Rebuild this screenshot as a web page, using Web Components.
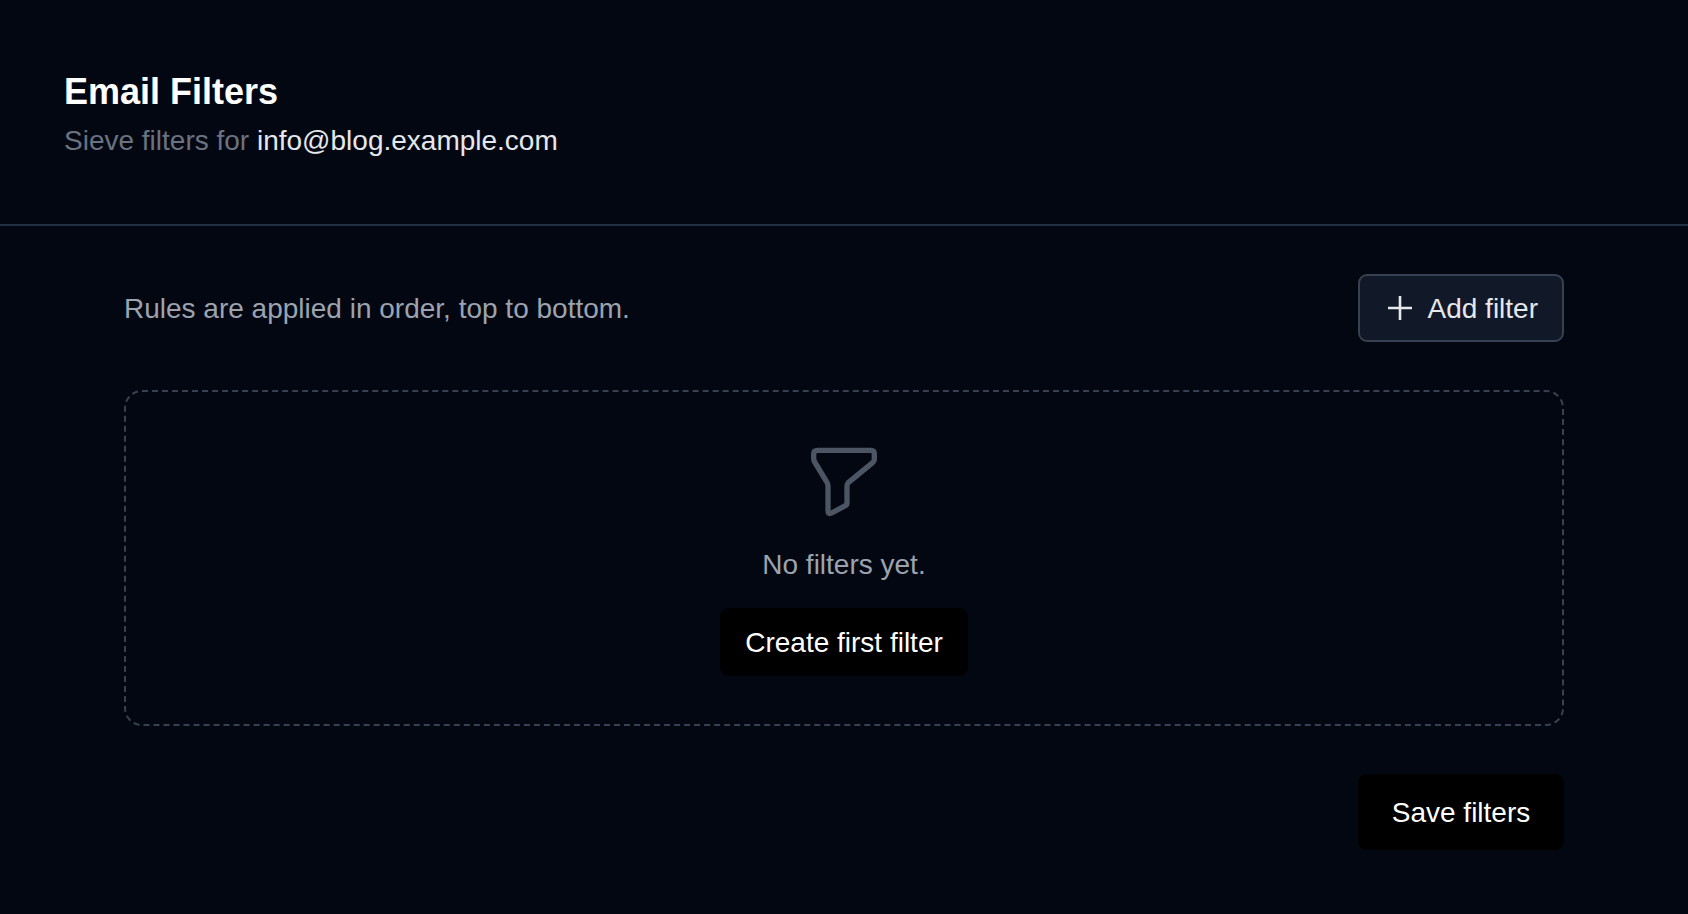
<!doctype html>
<html>
<head>
<meta charset="utf-8">
<title>Email Filters</title>
<style>
  html, body { margin: 0; height: 100%; }
  body { background: #030712; color: #e5e7eb; font-family: "Liberation Sans", Arial, sans-serif; }
</style>
</head>
<body>
<filters-page></filters-page>

<script>
class PageHeader extends HTMLElement {
    constructor() {
        super();
        this.attachShadow({mode: 'open'});
        this.shadowRoot.innerHTML = `
            <style>
                :host { display: block; padding: 72px 64px 63px; border-bottom: 2px solid #243044; }
                h1 { margin: 0; font-size: 36px; line-height: 40px; font-weight: 700; color: #fff; }
                p { margin: 9px 0 0; font-size: 28px; line-height: 40px; color: #6b7280; }
                b { font-weight: 400; color: #e5e7eb; }
            </style>
            <h1><slot name="title"></slot></h1>
            <p><slot name="sub"></slot> <b><slot name="mail"></slot></b></p>`;
    }
}

class UiButton extends HTMLElement {
    constructor() {
        super();
        this.attachShadow({mode: 'open'});
        this.shadowRoot.innerHTML = `
            <style>
                :host { display: inline-flex; align-items: center; justify-content: center; box-sizing: border-box;
                        font-size: 28px; line-height: 40px; border-radius: 9px; background: #000; color: #fff; padding-top: 2px; }
                :host([kind=outline]) { background: #111827; border: 2px solid #374151; color: #e5e7eb; height: 68px; width: 206px;
                                        justify-content: flex-start; padding-left: 26px; gap: 13.5px; }
                :host([kind=create]) { height: 68px; width: 248px; }
                :host([kind=save]) { height: 76px; width: 206px; }
                ::slotted(svg) { display: block; margin-top: -2px; }
            </style>
            <slot></slot>`;
    }
}

class EmptyFilters extends HTMLElement {
    constructor() {
        super();
        this.attachShadow({mode: 'open'});
        this.shadowRoot.innerHTML = `
            <style>
                :host { display: flex; flex-direction: column; align-items: center; box-sizing: border-box; height: 336px;
                        border: 2px dashed #374151; border-radius: 18px; padding-top: 53px; }
                svg { display: block; width: 72px; height: 74px; color: #4b5563; }
                p { margin: 26px 0 23px; font-size: 28px; line-height: 40px; color: #9ca3af; }
            </style>
            <svg viewBox="9 15 216 222" fill="none" stroke="currentColor" stroke-width="16" stroke-linecap="round" stroke-linejoin="round">
                <path d="M38 31H198Q208 31 208 42V58Q208 64 203 68L130 128Q126 132 126 138V190Q126 195 121 197L82 218Q69 225 69 212V138Q69 132 66 127L29 66Q26 60 26 54V42Q26 31 38 31Z"/>
            </svg>
            <p><slot name="text"></slot></p>
            <slot></slot>`;
    }
}

class FiltersPage extends HTMLElement {
    constructor() {
        super();
        this.attachShadow({mode: 'open'});
        this.shadowRoot.innerHTML = `
            <style>
                :host { display: block; }
                main { padding: 48px 124px 0 124px; display: flex; flex-direction: column; gap: 48px; }
                .top { display: flex; justify-content: space-between; align-items: center; }
                .top span { font-size: 28px; line-height: 40px; color: #9ca3af; padding-top: 2px; }
                .end { display: flex; justify-content: flex-end; }
            </style>
            <page-header>
                <span slot="title">Email Filters</span>
                <span slot="sub">Sieve filters for</span>
                <span slot="mail">info@blog.example.com</span>
            </page-header>
            <main>
                <div class="top">
                    <span>Rules are applied in order, top to bottom.</span>
                    <ui-button kind="outline">
                        <svg width="28" height="28" viewBox="0 0 28 28" fill="none" stroke="currentColor" stroke-width="2.6"><path d="M14 2v24M2 14h24"/></svg>
                        Add filter
                    </ui-button>
                </div>
                <empty-filters>
                    <span slot="text">No filters yet.</span>
                    <ui-button kind="create">Create first filter</ui-button>
                </empty-filters>
                <div class="end"><ui-button kind="save">Save filters</ui-button></div>
            </main>`;
    }
}

customElements.define('page-header', PageHeader);
customElements.define('ui-button', UiButton);
customElements.define('empty-filters', EmptyFilters);
customElements.define('filters-page', FiltersPage);
</script>
</body>
</html>
